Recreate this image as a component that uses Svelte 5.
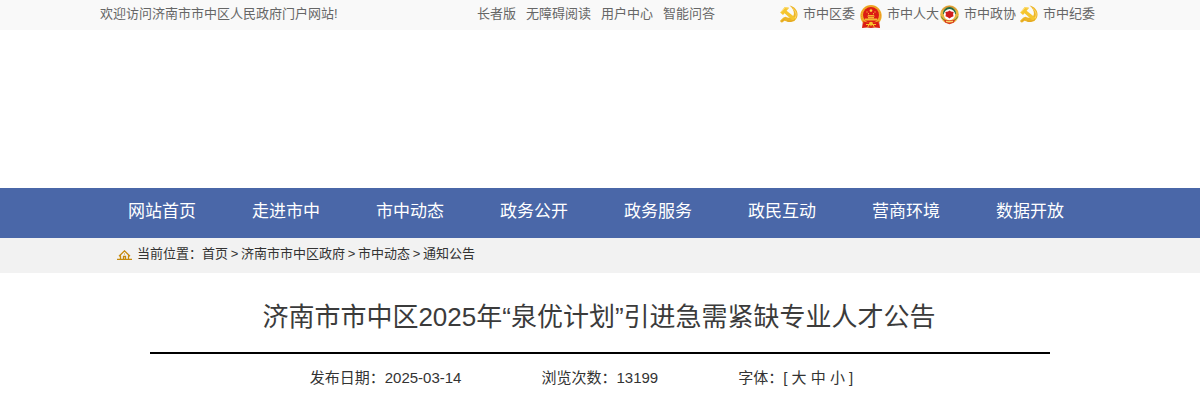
<script>
  const tools = ['长者版', '无障碍阅读', '用户中心', '智能问答'];

  const depts = [
    { name: '市中区委', icon: 'party' },
    { name: '市中人大', icon: 'nation' },
    { name: '市中政协', icon: 'cppcc' },
    { name: '市中纪委', icon: 'party' }
  ];

  const menu = ['网站首页', '走进市中', '市中动态', '政务公开', '政务服务', '政民互动', '营商环境', '数据开放'];
  const crumbs = ['首页', '济南市市中区政府', '市中动态', '通知公告'];
  const sizes = ['大', '中', '小'];
</script>

<header>
  <div class="topbar">
    <div class="wrap topbar-inner">
      <span class="welcome">欢迎访问济南市市中区人民政府门户网站!</span>
      <div class="tools">
        {#each tools as tool}
          <a href="#top">{tool}</a>
        {/each}
      </div>
      <div class="depts">
        {#each depts as dept}
          <a href="#top">
            {#if dept.icon === 'party'}
              <svg class="party" width="18" height="18" viewBox="0 0 18 18" aria-hidden="true">
                <path d="M9.500.5C14.500 1.500 17.800 5.500 17.500 10c-.3 5-5 7.800-10 6.800l-3-1-2 1.400c-1.200.6-2.600-.4-2.200-1.700L3.500 12.600l2-.8c3 1.700 6.700 1.200 8-1.400 1.300-3-.4-7-4-9.900z" fill="#edb527" />
                <path d="M.2 7.500 4.800 2l4.400.8-2.600 2.900 9.800 7.900-2.600 2.900L4.500 8.200 3 9.900z" fill="#f5c52f" />
                <path d="M1 7.300 5.200 2.600l2.600.5M12.800 3.400c3.400 2.800 4.200 6.600 2.300 9.600" fill="none" stroke="#ffe078" stroke-width=".9" />
                <path d="M1.500 16.300 4.700 14.200M7 15.900c3 .8 6 .4 8-1.400" fill="none" stroke="#dc9f1e" stroke-width=".8" />
              </svg>
            {:else if dept.icon === 'nation'}
              <svg class="nation" width="22" height="24" viewBox="0 0 22 24" aria-hidden="true">
                <path d="M3 16h16l1 7-5-.5-4 .5-4-.5-5 .5z" fill="#d91e12" />
                <circle cx="11" cy="10.800" r="10.700" fill="#f0b028" />
                <circle cx="11" cy="10.500" r="9.500" fill="none" stroke="#e8701e" stroke-width=".6" stroke-dasharray="1 1" />
                <circle cx="11" cy="10" r="8" fill="#dc1b14" />
                <path d="m11 3.500.6 1.200 1.300.2-1 .9.3 1.300-1.200-.7-1.200.7.3-1.300-1-.9 1.300-.2z" fill="#ffdc42" />
                <path d="M6.500 6.500h1v1h-1zM8 8.200h1v1H8zM13 8.200h1v1h-1zM14.500 6.500h1v1h-1z" fill="#ffdc42" />
                <path d="M7 11.500 8.300 10h5.400l1.300 1.500zM8 12h6v1.200H8zM4.800 13.400h12.400v2.200H4.800z" fill="#f5b832" />
                <path d="M3 16.300c5 1.800 11 1.800 16 0l-1 4.200c-4 1.500-10 1.500-14 0z" fill="#dc1b14" />
                <path d="M6 19.500h10M7.500 22.500l1.500-3M14.500 22.500l-1.500-3" stroke="#f6c52b" stroke-width="1" />
                <circle cx="11" cy="18.800" r="2" fill="#f6c52b" />
              </svg>
            {:else}
              <svg class="cppcc" width="19" height="20" viewBox="0 0 19 20" aria-hidden="true">
                <circle cx="9.500" cy="9.500" r="9.300" fill="#e8b640" />
                <path d="M2.300 5.500A8.500 8.500 0 0 1 16.700 5.500" fill="none" stroke="#d98a35" stroke-width="1" />
                <path d="M3 8.500a6.500 6.500 0 0 1 13 0l-1 1H4z" fill="#256a43" />
                <circle cx="9.500" cy="9.600" r="5.600" fill="#fff" />
                <path d="m9.500 5.400 1.500 1 2.700.6-.6 2 .4 2.200-2.300 1-1.700 1.300-1.700-1.300-2.300-1 .4-2.200-.6-2L8 6.400z" fill="#cf1d1d" />
                <path d="M1.300 11.500c1 2 2.300 3.400 4 4M17.700 11.500c-1 2-2.300 3.400-4 4" fill="none" stroke="#5f8c3b" stroke-width="1" />
                <path d="M4 14.500c3.500 1.200 7.500 1.200 11 0l-1 3-4.500 1.800L5 17.500z" fill="#d9361f" />
                <path d="M6 16.300c2.300.6 4.700.6 7 0" fill="none" stroke="#f8d768" stroke-width="1.300" />
              </svg>
            {/if}
            <span>{dept.name}</span>
          </a>
        {/each}
      </div>
    </div>
  </div>
  <div class="banner"></div>
  <nav class="menu">
    <div class="wrap menu-inner">
      {#each menu as item}
        <a href="#top">{item}</a>
      {/each}
    </div>
  </nav>
</header>

<div class="position">
  <div class="wrap crumbs">
    <svg width="15" height="10" viewBox="0 0 15 10" aria-hidden="true">
      <path d="M0 9.500h15M2 6.300 7.500.9 13 6.300M3.500 5.500v4M11.500 5.500v4M6.500 9.500v-3h2v3" fill="none" stroke="#c68a0c" stroke-width="1.300" />
      <path d="M7 3.600h1v1H7z" fill="#c68a0c" />
    </svg>
    <span>当前位置：</span>
    {#each crumbs as crumb, i}
      {#if i > 0}<span class="sep">&gt;</span>{/if}
      <a href="#top">{crumb}</a>
    {/each}
  </div>
</div>

<main>
  <h1>济南市市中区2025年“泉优计划”引进急需紧缺专业人才公告</h1>
  <div class="meta">
    <span>发布日期：2025-03-14</span>
    <span>浏览次数：13199</span>
    <span>
      字体：[
      {#each sizes as size}
        <button type="button">{size}</button>{' '}
      {/each}
      ]
    </span>
  </div>
</main>

<style>
  :global(body) {
    background: #fff;
    color: #333;
    font-family: "Liberation Sans", "Noto Sans CJK SC", sans-serif;
    font-size: 13px;
  }

  a {
    color: inherit;
    text-decoration: none;
  }

  .wrap {
    max-width: 1000px;
    margin: 0 auto;
  }

  .topbar {
    background: #f9f9f9;
    color: #666;
  }

  .topbar-inner {
    display: grid;
    grid-template-columns: 1fr auto 1fr;
    align-items: center;
    height: 30px;
    line-height: 28px;
    white-space: nowrap;
  }

  .tools {
    display: flex;
    gap: 10px;
    padding-right: 8px;
  }

  .welcome,
  .tools {
    height: 30px;
  }

  .depts {
    display: grid;
    grid-template-columns: repeat(4, 80px);
    justify-content: end;
    height: 30px;
  }

  .depts a {
    display: flex;
    gap: 5px;
  }

  .depts svg {
    flex: none;
    margin-top: 5px;
  }

  .banner {
    height: 158px;
  }

  .menu {
    background: #4a67a8;
    color: #fff;
    font-size: 17px;
  }

  .menu-inner {
    display: grid;
    grid-template-columns: repeat(8, 1fr);
    height: 50px;
    padding-right: 8px;
    box-sizing: border-box;
    line-height: 48px;
    text-align: center;
  }

  .position {
    background: #f2f2f2;
  }

  .crumbs {
    display: flex;
    height: 35px;
    padding-left: 17px;
    box-sizing: border-box;
    line-height: 32px;
  }

  .crumbs svg {
    margin: 12px 5px 0 0;
  }

  .sep {
    width: 13px;
    text-align: center;
  }

  main {
    max-width: 900px;
    margin: 0 auto;
  }

  h1 {
    margin: 0;
    padding: 19px 2px 10px 0;
    border-bottom: 2px solid #000;
    color: #3b3b3b;
    font-size: 26px;
    font-weight: normal;
    line-height: 50px;
    text-align: center;
  }

  .meta {
    display: flex;
    justify-content: center;
    gap: 80px;
    padding-right: 37px;
    font-size: 15px;
    line-height: 48px;
  }

  .meta button {
    padding: 0;
    border: none;
    background: none;
    color: inherit;
    font: inherit;
    cursor: pointer;
  }
</style>
